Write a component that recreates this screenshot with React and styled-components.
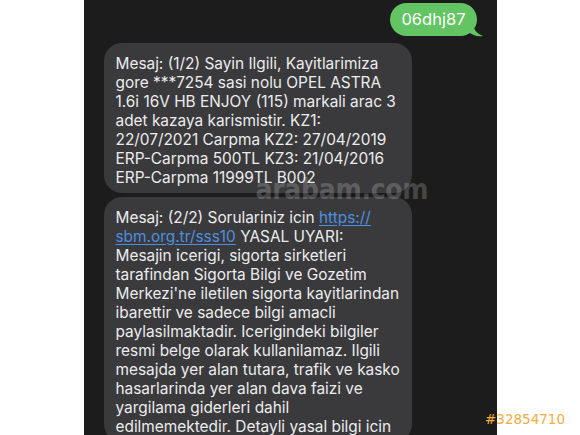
import React from "react";
import styled, { createGlobalStyle } from "styled-components";

const Global = createGlobalStyle`
  html, body { margin: 0; padding: 0; background: #ffffff; }
  body { font-family: Inter, "Noto Sans", sans-serif; }
`;

const Page = styled.div`
  position: relative;
  width: 580px;
  height: 435px;
  display: flex;
  justify-content: center;
  overflow: hidden;
`;

const Phone = styled.div`
  position: relative;
  width: 413px;
  height: 435px;
  box-sizing: border-box;
  background: #1c1c1c;
  display: flex;
  flex-direction: column;
  padding: 3px 20px 0;
  overflow: hidden;
`;

const SentBubble = styled.div`
  position: relative;
  align-self: flex-end;
  background: #62c462;
  color: #ffffff;
  font-size: 16.5px;
  line-height: 19px;
  padding: 7px 11px 7px 11px;
  border-radius: 17px;
  margin-bottom: 7px;
`;

const Tail = styled.svg`
  position: absolute;
  right: -6px;
  bottom: -1px;
  width: 14px;
  height: 14px;
`;

const ReceivedBubble = styled.div`
  width: 308px;
  box-sizing: border-box;
  background: #3a3a3d;
  color: #ececec;
  font-size: 15.4px;
  line-height: 19px;
  padding: 11px 12px 6px;
  border-radius: 18px;
  white-space: pre;
  margin-bottom: ${(p) => p.$gap || 0}px;
`;

const Link = styled.span`
  color: #4d8fe0;
  text-decoration: underline;
  text-underline-offset: 2px;
`;

const Watermark = styled.div`
  position: absolute;
  left: 172px;
  top: 173px;
  font-family: "DejaVu Sans Condensed", "DejaVu Sans", sans-serif;
  font-stretch: condensed;
  font-weight: bold;
  font-size: 28px;
  letter-spacing: -0.3px;
  color: rgba(255, 255, 255, 0.2);
  pointer-events: none;
`;

const AdId = styled.div`
  position: absolute;
  left: 485px;
  top: 411px;
  font-family: "DejaVu Sans", sans-serif;
  font-size: 13.5px;
  color: #f2ad3e;
`;

export default function App() {
  return (
    <>
      <Global />
      <Page>
        <Phone>
          <SentBubble>
            06dhj87
            <Tail viewBox="0 0 14 14">
              <path d="M0 0 L4 0 C4 6 8 11 14 13 C8 14 3 12 0 9 Z" fill="#62c462" />
            </Tail>
          </SentBubble>
          <ReceivedBubble $gap={4}>
            {`Mesaj: (1/2) Sayin Ilgili, Kayitlarimiza
gore ***7254 sasi nolu OPEL ASTRA
1.6i 16V HB ENJOY (115) markali arac 3
adet kazaya karismistir. KZ1:
22/07/2021 Carpma KZ2: 27/04/2019
ERP-Carpma 500TL KZ3: 21/04/2016
ERP-Carpma 11999TL B002`}
          </ReceivedBubble>
          <ReceivedBubble>
            {`Mesaj: (2/2) Sorulariniz icin `}
            <Link>{`https://
sbm.org.tr/sss10`}</Link>
            {` YASAL UYARI:
Mesajin icerigi, sigorta sirketleri
tarafindan Sigorta Bilgi ve Gozetim
Merkezi'ne iletilen sigorta kayitlarindan
ibarettir ve sadece bilgi amacli
paylasilmaktadir. Icerigindeki bilgiler
resmi belge olarak kullanilamaz. Ilgili
mesajda yer alan tutara, trafik ve kasko
hasarlarinda yer alan dava faizi ve
yargilama giderleri dahil
edilmemektedir. Detayli yasal bilgi icin`}
          </ReceivedBubble>
          <Watermark>arabam.com</Watermark>
        </Phone>
        <AdId>#32854710</AdId>
      </Page>
    </>
  );
}
